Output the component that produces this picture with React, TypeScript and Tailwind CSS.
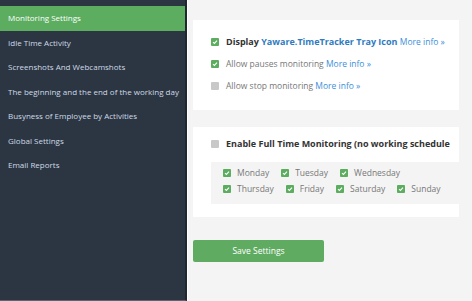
import React from "react";

const Check = ({ on = true }: { on?: boolean }) => (
  <span
    className={`inline-flex items-center justify-center w-[8px] h-[8px] rounded-[1px] shrink-0 ${
      on ? "bg-[#5cad5f]" : "bg-[#c8c8c8]"
    }`}
  >
    {on && (
      <svg width="6" height="6" viewBox="0 0 6 6">
        <path d="M1 3.1 L2.4 4.4 L5 1.6" stroke="#fff" strokeWidth="1.1" fill="none" />
      </svg>
    )}
  </span>
);

const items = [
  "Monitoring Settings",
  "Idle Time Activity",
  "Screenshots And Webcamshots",
  "The beginning and the end of the working day",
  "Busyness of Employee by Activities",
  "Global Settings",
  "Email Reports",
];

const Day = ({ label }: { label: string }) => (
  <div className="flex items-center gap-[6px]">
    <Check />
    <span>{label}</span>
  </div>
);

export default function App() {
  return (
    <div
      className="flex w-[472px] h-[301px] overflow-hidden bg-[#f4f4f4]"
      style={{ fontFamily: '"Open Sans", sans-serif' }}
    >
      <div className="w-[187px] h-[301px] shrink-0 bg-[#2b3642] border-r-[2px] border-r-[#1f2831] border-b border-b-[#5a6673] pt-[6px]">
        {items.map((t, i) => (
          <div
            key={t}
            className={`h-[24.5px] flex items-center pl-[8px] text-[8px] whitespace-nowrap ${
              i === 0 ? "bg-[#5cad5f] text-white" : "text-[#cfdae6]"
            }`}
          >
            {t}
          </div>
        ))}
      </div>
      <div className="w-[1px] bg-white shrink-0" />
      <div className="flex-1 pl-[5px] pt-[20px] min-w-0">
        <div className="w-[266px] h-[90px] bg-white pl-[18px] pt-[16px] flex flex-col gap-[10px] text-[8.5px] text-[#777]">
          <div className="flex items-center gap-[7px] h-[12px] whitespace-nowrap">
            <Check />
            <span className="text-[9px] font-bold text-[#333]">
              Display <span className="text-[#2f7bbf]">Yaware.TimeTracker Tray Icon</span>{" "}
              <span className="font-normal text-[#3d8fd9] text-[8.5px]">More info »</span>
            </span>
          </div>
          <div className="flex items-center gap-[7px] h-[12px] whitespace-nowrap">
            <Check />
            <span>
              Allow pauses monitoring <span className="text-[#3d8fd9]">More info »</span>
            </span>
          </div>
          <div className="flex items-center gap-[7px] h-[12px] whitespace-nowrap">
            <Check on={false} />
            <span>
              Allow stop monitoring <span className="text-[#3d8fd9]">More info »</span>
            </span>
          </div>
        </div>
        <div className="w-[266px] h-[90px] mt-[17px] bg-white pl-[18px] pt-[11px]">
          <div className="flex items-center gap-[7px] h-[12px] whitespace-nowrap">
            <Check on={false} />
            <span className="text-[9px] font-bold text-[#333]">
              Enable Full Time Monitoring (no working schedule
            </span>
          </div>
          <div className="mt-[12px] w-[261px] h-[42px] bg-[#f4f4f4] pl-[12px] pt-[5px] flex flex-col gap-[4px] text-[8.5px] text-[#777]">
            <div className="flex items-center gap-[12px] h-[12px]">
              <Day label="Monday" />
              <Day label="Tuesday" />
              <Day label="Wednesday" />
            </div>
            <div className="flex items-center gap-[12px] h-[12px]">
              <Day label="Thursday" />
              <Day label="Friday" />
              <Day label="Saturday" />
              <Day label="Sunday" />
            </div>
          </div>
        </div>
        <button className="mt-[23px] w-[131px] h-[22px] bg-[#5fab62] rounded-[2px] text-white text-[8.5px] flex items-center justify-center">
          Save Settings
        </button>
      </div>
    </div>
  );
}
